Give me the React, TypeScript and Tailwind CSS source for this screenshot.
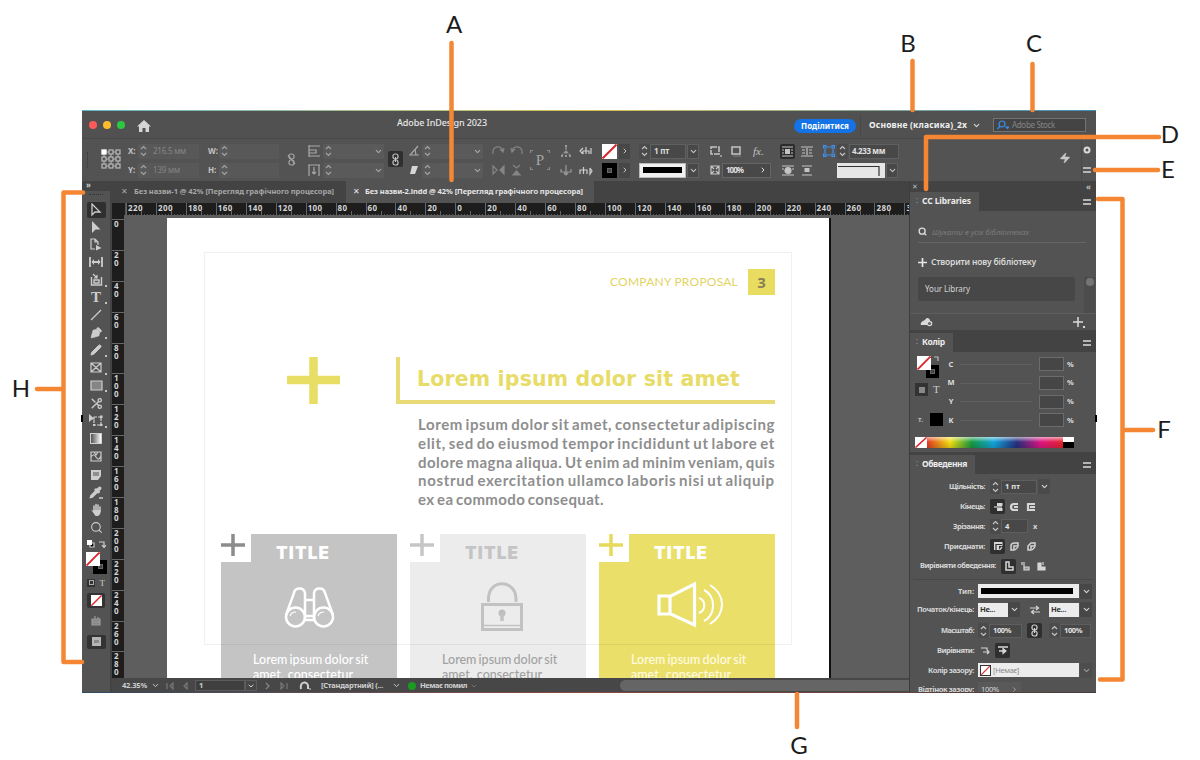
/**
 * Annotated InDesign workspace overview
 * The application window with lettered callouts (A-H) around it
 */

import React, { useLayoutEffect, useRef } from 'react';
import { ChevronDown, ChevronRight, Pencil, PenTool, Pipette, Scissors, Search, Zap } from 'lucide-react';

interface FitProps {
  w: number;
  className?: string;
  children: string;
}

/**
 * Single line of text, tracked so that it fills the given width
 */
const Fit: React.FC<FitProps> = ({ w, className = '', children }) => {
  const ref = useRef<HTMLSpanElement>(null);

  useLayoutEffect(() => {
    const el = ref.current;
    if (!el) return;
    const fit = () => {
      el.style.letterSpacing = '0px';
      const natural = el.getBoundingClientRect().width;
      el.style.letterSpacing = `${(w - natural) / children.length}px`;
    };
    fit();
    document.fonts?.ready.then(fit);
  }, [w, children]);

  return (
    <span ref={ref} className={`inline-block shrink-0 whitespace-pre ${className}`}>
      {children}
    </span>
  );
};

interface IcoProps {
  w?: number;
  h?: number;
  className?: string;
  children: React.ReactNode;
}

const Ico: React.FC<IcoProps> = ({ w = 14, h = 14, className = '', children }) => (
  <svg
    width={w}
    height={h}
    viewBox={`0 0 ${w} ${h}`}
    fill="none"
    stroke="currentColor"
    strokeWidth={1.2}
    className={`shrink-0 ${className}`}
  >
    {children}
  </svg>
);

const Chain: React.FC<{ broken?: boolean; className?: string }> = ({ broken, className = '' }) => (
  <Ico w={9} h={13} className={className}>
    <rect x="2" y="1" width="5" height="5" rx="2" />
    <rect x="2" y="7" width="5" height="5" rx="2" />
    <path d={broken ? 'M1 2 8 11' : 'M4.500 4V9'} />
  </Ico>
);

const Spinner: React.FC<{ dim?: boolean; className?: string }> = ({ dim = false, className = '' }) => (
  <div
    className={`flex h-[15px] w-[11px] shrink-0 items-center justify-center rounded-[2px] ${
      dim ? 'bg-[#5a5a5a] text-[#a3a3a3]' : 'bg-[#4b4b4b] text-[#c4c4c4]'
    } ${className}`}
  >
    <Ico w={7} h={12}>
      <path d="M1 4 3.5 1.5 6 4M1 8 3.5 10.5 6 8" />
    </Ico>
  </div>
);

const Chev: React.FC<{ className?: string }> = ({ className = '' }) => (
  <div className={`flex h-[15px] w-[12px] shrink-0 items-center justify-center ${className}`}>
    <ChevronDown size={9} strokeWidth={3} />
  </div>
);

const NoneSwatch: React.FC<{ className?: string }> = ({ className = '' }) => (
  <svg viewBox="0 0 15 15" preserveAspectRatio="none" className={`shrink-0 bg-white ${className}`}>
    <path d="M0.5 14.5 14.5 0.5" stroke="#d9262c" strokeWidth="2" />
  </svg>
);

const BlackSwatch: React.FC<{ className?: string }> = ({ className = '' }) => (
  <div className={`flex shrink-0 items-center justify-center bg-black ${className}`}>
    <div className="size-[5px] border border-[#666] bg-[#444]" />
  </div>
);

const Menu: React.FC<{ className?: string }> = ({ className = '' }) => (
  <div className={`flex h-[6px] w-[8px] shrink-0 flex-col justify-between ${className}`}>
    <div className="h-[2px] bg-[#b5b5b5]" />
    <div className="h-[2px] bg-[#b5b5b5]" />
  </div>
);

const TitleBar: React.FC = () => (
  <div className="flex h-[27px] items-center bg-[#515151]">
    <div className="ml-[7px] size-[8px] rounded-full bg-[#fb5b57]" />
    <div className="ml-[6px] size-[8px] rounded-full bg-[#fdbc2e]" />
    <div className="ml-[6px] size-[8px] rounded-full bg-[#2bc840]" />
    <Ico w={14} h={12} className="ml-[12px] mt-[2px] text-[#d6d6d6]">
      <path d="M7 0 0 6.5H2V12H5.5V8H8.500V12H12V6.500H14Z" fill="currentColor" stroke="none" />
    </Ico>
    <div className="ml-[246px] mt-[-3px] w-[90px] text-[9px] font-medium text-[#e8e8e8]">
      <Fit w={90}>Adobe InDesign 2023</Fit>
    </div>
    <div className="ml-[307px] mt-[2px] flex h-[14px] w-[62px] items-center justify-center rounded-full bg-[#1473e6] text-[8px] font-bold text-white">
      <Fit w={48}>Поділитися</Fit>
    </div>
    <div className="ml-[4px] h-[20px] w-px bg-[#484848]" />
    <div className="ml-[8px] mt-[2px] w-[98px] text-[8.500px] font-bold text-[#f0f0f0]">
      <Fit w={98}>Основне (класика)_2x</Fit>
    </div>
    <ChevronDown size={9} strokeWidth={3} className="ml-[5px] mt-[2px] text-[#d6d6d6]" />
    <div className="ml-[12px] flex h-[14px] w-[93px] items-center border border-[#737373] bg-[#444] pl-[3px]">
      <Ico w={12} h={10} className="text-[#378ef0]">
        <circle cx="5" cy="4" r="3" />
        <path d="M3 6 0.500 9M9 7H12L10.500 8.500Z" />
      </Ico>
      <Fit w={43} className="ml-[3px] text-[8px] text-[#858585]">Adobe Stock</Fit>
    </div>
  </div>
);

/** Two stacked rows of the control panel */
const Pair: React.FC<{ className?: string; children: React.ReactNode }> = ({ className = '', children }) => (
  <div className={`flex shrink-0 flex-col gap-[3px] ${className}`}>{children}</div>
);

const Row: React.FC<{ className?: string; children?: React.ReactNode }> = ({ className = '', children }) => (
  <div className={`flex h-[16px] items-center ${className}`}>{children}</div>
);

const ControlBar: React.FC = () => (
  <div className="flex h-[43px] items-start overflow-hidden border-t border-[#484848] bg-[#535353] pt-[4px] text-[8px] font-bold text-[#c4c4c4]">
    <div className="ml-[5px] mt-[9px] h-[16px] w-0 border-l border-dotted border-[#3a3a3a]" />
    <Ico w={20} h={20} className="ml-[13px] mt-[6px] text-[#b9b9b9]">
      <path d="M3 3H17V17H3ZM10 3V17M3 10H17" strokeWidth="1" />
      {[3, 10, 17].map((y) =>
        [3, 10, 17].map((x) => <rect key={`${x}-${y}`} x={x - 2} y={y - 2} width="4" height="4" fill="#535353" />)
      )}
      <rect x="0.500" y="0.500" width="5" height="5" fill="#fff" stroke="none" />
    </Ico>
    <Pair className="ml-[7px] w-[71px]">
      <Row>
        <span className="w-[10px]">X:</span>
        <Spinner dim />
        <div className="flex h-[15px] w-[50px] items-center bg-[#585858] pl-[4px] font-normal text-[#858585]"><Fit w={33}>216.5 мм</Fit></div>
      </Row>
      <Row>
        <span className="w-[10px]">Y:</span>
        <Spinner dim />
        <div className="flex h-[15px] w-[50px] items-center bg-[#585858] pl-[4px] font-normal text-[#858585]"><Fit w={27}>139 мм</Fit></div>
      </Row>
    </Pair>
    <Pair className="ml-[9px] w-[71px]">
      {['W:', 'H:'].map((l) => (
        <Row key={l}>
          <span className="w-[11px]">{l}</span>
          <Spinner dim />
          <div className="h-[15px] w-[49px] bg-[#585858]" />
        </Row>
      ))}
    </Pair>
    <Chain broken className="ml-[8px] mr-[2px] mt-[10px] text-[#a5a5a5]" />
    <Pair className="ml-[10px] w-[76px] text-[#a9a9a9]">
      <Row>
        <Ico w={12} h={12}><path d="M1 0V12M1 1H12M1 5H8V8H1M1 11H12" /></Ico>
        <Spinner dim className="ml-[3px]" />
        <div className="h-[15px] w-[38px] bg-[#5a5a5a]" />
        <Chev className="bg-[#5a5a5a]" />
      </Row>
      <Row>
        <Ico w={12} h={12}><path d="M0 1H12M1 1V12M11 1V12M6 3V10M4 8 6 10 8 8" /></Ico>
        <Spinner dim className="ml-[3px]" />
        <div className="h-[15px] w-[38px] bg-[#5a5a5a]" />
        <Chev className="bg-[#5a5a5a]" />
      </Row>
    </Pair>
    <div className="ml-[4px] mt-[8px] flex h-[16px] w-[15px] shrink-0 items-center justify-center rounded-[2px] bg-[#2f2f2f]">
      <Chain />
    </div>
    <Pair className="ml-[6px] w-[76px] text-[#a9a9a9]">
      <Row>
        <Ico w={10} h={12}><path d="M9 1 1 10H10M6 4 7 10" /></Ico>
        <Spinner dim className="ml-[3px]" />
        <div className="h-[15px] w-[38px] bg-[#5a5a5a]" />
        <Chev className="bg-[#5a5a5a]" />
      </Row>
      <Row>
        <Ico w={10} h={12}><path d="M3 2H9L6 10H1Z" fill="#d6d6d6" stroke="none" /></Ico>
        <Spinner dim className="ml-[3px]" />
        <div className="h-[15px] w-[38px] bg-[#5a5a5a]" />
        <Chev className="bg-[#5a5a5a]" />
      </Row>
    </Pair>
    <Pair className="ml-[7px] w-[32px] text-[#858585]">
      <Row className="gap-[5px]">
        <Ico w={13} h={12}><path d="M1 9C0 0 10 0 11 6M8 4 11 7 12 3" /></Ico>
        <Ico w={13} h={12}><path d="M12 9C13 0 3 0 2 6M5 4 2 7 1 3" /></Ico>
      </Row>
      <Row className="gap-[5px]">
        <Ico w={13} h={12}><path d="M1 2 5 6 1 10Z" /><path d="M12 2 8 6 12 10Z" fill="currentColor" /></Ico>
        <Ico w={13} h={12}><path d="M3 1 6.500 4 10 1" /><path d="M3 11 6.500 7 10 11Z" fill="currentColor" /></Ico>
      </Row>
    </Pair>
    <div className="relative ml-[6px] mt-[7px] flex size-[20px] shrink-0 items-center justify-center font-['Liberation_Serif'] text-[15px] font-normal leading-none text-[#a5a5a5]">
      <Ico w={20} h={20} className="absolute left-0 top-0 text-[#8a8a8a]"><path d="M0.500 3V0.500H3M17 0.500H19.500V3M19.500 17V19.500H17M3 19.500H0.500V17" /></Ico>
      P
    </div>
    <Pair className="ml-[10px] w-[34px] text-[#9a9a9a]">
      <Row className="gap-[7px]">
        <Ico w={12} h={12}><path d="M6 2V10M6 6 2 10M6 6 10 10" strokeDasharray="3 1" /><path d="M5 0H7V2H5ZM1 10H3V12H1ZM5 10H7V12H5ZM9 10H11V12H9Z" fill="currentColor" stroke="none" /></Ico>
        <Ico w={14} h={12} className="text-[#cfcfcf]"><path d="M4 3 1 6 4 9M4 9V6H7V9M7 2V6M10 9V6H7M12 3V9" /></Ico>
      </Row>
      <Row className="gap-[7px]">
        <Ico w={12} h={12}><path d="M6 1V11M1 5V8H11V5M4 9 6 11 8 9" /></Ico>
        <Ico w={14} h={12} className="text-[#cfcfcf]"><path d="M1 10V6H8V10M4.500 6V3M4.500 6V10M11 4 13 7 11 10V4" /></Ico>
      </Row>
    </Pair>
    <Pair className="ml-[8px] w-[30px]">
      <Row>
        <NoneSwatch className="h-[15px] w-[15px]" />
        <div className="ml-[2px] flex h-[15px] w-[11px] items-center justify-center bg-[#474747]"><ChevronRight size={8} strokeWidth={3} /></div>
      </Row>
      <Row>
        <BlackSwatch className="h-[15px] w-[15px]" />
        <div className="ml-[2px] flex h-[15px] w-[11px] items-center justify-center bg-[#474747]"><ChevronRight size={8} strokeWidth={3} /></div>
      </Row>
    </Pair>
    <Pair className="ml-[7px] w-[61px]">
      <Row>
        <Spinner />
        <div className="flex h-[15px] w-[36px] items-center border border-[#606060] bg-[#484848] pl-[3px] text-[#dedede]"><Fit w={15}>1 пт</Fit></div>
        <Chev className="ml-px border border-[#606060] bg-[#484848]" />
      </Row>
      <Row>
        <div className="flex h-[15px] w-[47px] shrink-0 items-center border border-[#bbb] bg-[#f0f0f0] px-[3px]"><div className="h-[6px] w-full bg-black" /></div>
        <Chev className="ml-px border border-[#606060] bg-[#484848]" />
      </Row>
    </Pair>
    <Pair className="ml-[10px] w-[62px]">
      <Row className="gap-[9px]">
        <Ico w={12} h={12}><path d="M1 2H9V9H1Z" strokeWidth="1.500" strokeDasharray="6 1" /><path d="M11 10V12" /></Ico>
        <Ico w={10} h={12}><path d="M1 2H9V9H1Z" strokeWidth="1.500" /><path d="M2 11H10" stroke="#777" /></Ico>
        <span className="ml-[3px] font-['Liberation_Serif'] text-[11px] font-normal italic leading-none">fx.</span>
      </Row>
      <Row>
        <Ico w={10} h={11}><path d="M1 1H9V9H1ZM1 1 4 4M9 1 6 4M1 9 4 6M9 9 6 6" /></Ico>
        <div className="ml-[2px] flex h-[15px] w-[49px] shrink-0 items-center justify-between border border-[#656565] bg-[#484848] px-[3px] text-[#e0e0e0]">
          <Fit w={17}>100%</Fit>
          <ChevronRight size={8} strokeWidth={3} />
        </div>
      </Row>
    </Pair>
    <Pair className="ml-[8px] w-[34px]">
      <Row className="gap-[6px]">
        <div className="flex size-[15px] shrink-0 items-center justify-center rounded-[2px] bg-[#2c2c2c]">
          <Ico w={11} h={11}><path d="M0 1H11M0 10H11M0 4H2M9 4H11M0 7H2M9 7H11" /><rect x="3" y="3" width="5" height="5" fill="currentColor" stroke="none" /></Ico>
        </div>
        <Ico w={12} h={11}><path d="M0 1H12M0 10H12M1 4H4M8 4H11M1 7H4M8 7H11M6 2V9" /></Ico>
      </Row>
      <Row className="gap-[6px] pl-[2px]">
        <Ico w={12} h={11}><path d="M0 1H12M0 10H12M0 4H2M10 4H12" /><circle cx="6" cy="5.500" r="3" fill="currentColor" /></Ico>
        <Ico w={12} h={11} className="ml-[1px]"><path d="M1 1H11M1 10H11" /><rect x="3.500" y="3" width="5" height="4" fill="currentColor" stroke="none" /></Ico>
      </Row>
    </Pair>
    <Pair className="ml-[9px] w-[77px]">
      <Row>
        <Ico w={12} h={12} className="text-[#3f92ea]"><path d="M2 4V8M4 2H8M10 4V8M4 10H8" /><path d="M0.600 0.600H3V3H0.600ZM9 0.600H11.400V3H9ZM0.600 9H3V11.400H0.600ZM9 9H11.400V11.400H9Z" /></Ico>
        <Spinner className="ml-[2px]" />
        <div className="ml-px flex h-[15px] w-[50px] items-center border border-[#606060] bg-[#484848] pl-[2px] text-[#e0e0e0]"><Fit w={33}>4.233 мм</Fit></div>
      </Row>
      <Row className="pl-[14px]">
        <div className="flex h-[15px] w-[48px] shrink-0 items-center bg-[#e6e6e6]"><Ico w={46} h={13} className="text-[#333]"><path d="M1 2.500H42V12" /></Ico></div>
        <Chev className="ml-px border border-[#606060] bg-[#484848]" />
      </Row>
    </Pair>
    <Zap size={12} className="ml-[159px] mt-[9px] shrink-0 text-[#c8c8c8]" fill="#c8c8c8" strokeWidth={1} />
    <div className="ml-[10px] mt-[-4px] h-[43px] w-px bg-[#494949]" />
    <div className="flex w-[9px] shrink-0 flex-col items-center">
      <Ico w={8} h={8} className="mt-[3px] text-[#dadada]"><circle cx="4" cy="4" r="2.500" strokeWidth="2" /></Ico>
      <Menu className="mt-[13px]" />
    </div>
  </div>
);

const TOOLS: React.ReactNode[] = [
  <Ico w={12} h={14}><path d="M2 1V12L5 9H10Z" strokeWidth="1.300" /></Ico>,
  <Ico w={12} h={14}><path d="M2 1V13L5.500 9.500H10.500Z" fill="currentColor" stroke="none" /></Ico>,
  <Ico w={12} h={13}><path d="M5 11H1V1H5L8 4V7M5 1V4H8" /><path d="M6 7V12.500L11.500 10Z" fill="currentColor" stroke="none" /></Ico>,
  <Ico w={14} h={12}><path d="M1 1V11M13 1V11M3 6H11" strokeWidth="1.800" /><path d="M5 3 2.500 6 5 9ZM9 3 11.500 6 9 9Z" fill="currentColor" stroke="none" /></Ico>,
  <Ico w={13} h={13}><path d="M1.500 4V12H11.500V4M4 7V10H9V7Z" strokeWidth="1.400" /><path d="M3 1 7 5M7 2V5H4" /></Ico>,
  <span className="font-['Liberation_Serif'] text-[15px] font-bold leading-none">T</span>,
  <Ico w={12} h={12}><path d="M1 11 11 1" /></Ico>,
  <PenTool size={13} fill="currentColor" strokeWidth={1} className="-rotate-90" />,
  <Pencil size={12} fill="currentColor" />,
  <Ico w={13} h={12}><path d="M1 1H11V10H1ZM1 1 11 10M11 1 1 10" /></Ico>,
  <Ico w={13} h={12}><path d="M1 1H12V10H1Z" fill="#858585" /></Ico>,
  <Scissors size={13} strokeWidth={2.5} className="rotate-180" />,
  <Ico w={14} h={13}><path d="M5 3H12V11H5Z" strokeDasharray="3 1" /><path d="M0 0V8L3 5.500H6Z" fill="currentColor" stroke="none" /><path d="M11 1.500H13.500V4H11ZM11 10H13.500V12H11ZM4 10H6V12H4Z" fill="currentColor" stroke="none" /></Ico>,
];

const ToolBar: React.FC = () => (
  <div className="flex w-[28px] shrink-0 flex-col items-center bg-[#535353] text-[#cdcdcd]">
    <div className="h-[10px] w-full bg-[#434343] pl-[4px] text-[8px] font-bold leading-[8px]">»</div>
    <div className="mt-[3px] h-[1px] w-[14px] border-t border-dotted border-[#333]" />
    <div className="mt-[7px] flex flex-col items-center">
      {TOOLS.map((tool, i) => (
        <div
          key={i}
          className={
            i === 0
              ? 'flex h-[16px] w-[19px] items-center justify-center rounded-[2px] bg-[#2f2f2f]'
              : 'relative flex h-[17.650px] w-[19px] items-center justify-center'
          }
        >
          {tool}
          {[4, 5, 7, 8, 9, 10, 12].includes(i) && <i className="absolute bottom-[2px] right-[-1px] size-[2px] bg-[#c4c4c4]" />}
        </div>
      ))}
    </div>
    <div className="mt-[3px] h-[11px] w-[12px] border border-[#d0d0d0] bg-linear-to-r from-[#555] to-white" />
    <Ico w={12} h={11} className="mt-[7px]"><path d="M1 1H11V10H1ZM1 6C3 3 4 3 6 6S9 9 11 5M4 1 6 4 8 1" /></Ico>
    <Ico w={11} h={12} className="mt-[7px]"><path d="M0 1H10V7L7 11H0Z" fill="currentColor" stroke="none" /><path d="M2 4H8M2 6H8" stroke="#535353" /></Ico>
    <div className="mt-[5px] flex items-end">
      <Pipette size={13} fill="currentColor" strokeWidth={2} />
      <div className="ml-[-3px] h-[2px] w-[4px] bg-[#aaa]" />
    </div>
    <Ico w={13} h={13} className="mt-[4px]">
      <path d="M4 8V3M6 7V1.500M8 7V2M10 8V4" strokeWidth="1.500" strokeLinecap="round" />
      <path d="M1 6.500 3.500 8V7H10.700V9C10 12 9 12.500 8 13H5.500Z" fill="currentColor" stroke="none" />
    </Ico>
    <Search size={13} className="mt-[5px]" />
    <div className="mt-[6px] flex w-[19px] items-center justify-between">
      <Ico w={8} h={8}><path d="M3 3H7V7H3Z" fill="#000" /><path d="M0 0H5V5H0Z" fill="#fff" stroke="none" /></Ico>
      <Ico w={8} h={8}><path d="M1 2H6V7M4 5 6 7.500 8 5" /></Ico>
    </div>
    <div className="relative mt-[4px] h-[22px] w-[20px]">
      <BlackSwatch className="absolute right-[-1px] bottom-[0px] size-[14px]" />
      <NoneSwatch className="absolute left-0 top-0 size-[14px]" />
    </div>
    <div className="mt-[5px] flex w-[18px] items-center justify-between">
      <div className="flex size-[8px] items-center justify-center bg-[#333]"><div className="size-[5px] border border-[#aaa]" /></div>
      <span className="font-['Liberation_Serif'] text-[9px] leading-[8px]">T</span>
    </div>
    <div className="mt-[6px] flex h-[15px] w-[18px] items-center justify-center rounded-[2px] bg-[#333]"><NoneSwatch className="size-[11px]" /></div>
    <Ico w={12} h={10} className="mt-[8px] text-[#999]"><path d="M2 3H10V9H2ZM5 0V3M8 1V3M2 6H10" fill="#888" /></Ico>
    <div className="mt-[9px] flex h-[14px] w-[19px] items-center justify-center rounded-[2px] bg-[#333]"><div className="flex h-[9px] w-[9px] items-center justify-center bg-[#b5b5b5]"><div className="h-[3px] w-[5px] bg-[#8a8a8a]" /></div></div>
  </div>
);

const H_RULER = [220, 200, 180, 160, 140, 120, 100, 80, 60, 40, 20, 0, 20, 40, 60, 80, 100, 120, 140, 160, 180, 200, 220, 240, 260, 280, 300];
const V_RULER = [0, 20, 40, 60, 80, 100, 120, 140, 160, 180, 200, 220, 240, 260, 280];

const Ticks: React.FC = () => (
  <svg width="30" height="12" className="absolute left-0 top-0">
    <path d="M0.500 0V12M15.500 8V12" stroke="#666" />
    <path d="M3.500 11V12M6.500 11V12M9.500 11V12M12.500 11V12M18.500 11V12M21.500 11V12M24.500 11V12M27.500 11V12" stroke="#555" />
  </svg>
);

interface CardProps {
  bg: string;
  plus: string;
  title: string;
  text: string;
  icon: React.ReactNode;
}

const Card: React.FC<CardProps> = ({ bg, plus, title, text, icon }) => (
  <div className={`flex h-[144px] w-[176px] shrink-0 flex-col overflow-hidden ${bg}`}>
    <div className="flex h-[38px] shrink-0 items-start">
      <div className="h-[28px] w-[30px] bg-white">
        <svg width="24" height="23" className={plus}>
          <path d="M0 11H24M12 0V22" stroke="currentColor" strokeWidth="3.500" />
        </svg>
      </div>
      <div className={`ml-[25px] mt-[8px] font-[Inter] text-[17px] font-black leading-[22px] ${title}`}>
        <Fit w={54}>TITLE</Fit>
      </div>
    </div>
    <div className="h-[76px] shrink-0 pt-[5px]">{icon}</div>
    <div className={`ml-[32px] flex w-[118px] shrink-0 flex-col font-[Lato] text-[12.500px] font-medium leading-[15px] [word-spacing:-1px] ${text}`}>
      <Fit w={118} className="mt-[4px]">Lorem ipsum dolor sit</Fit>
      <Fit w={118}>amet,  consectetur</Fit>
    </div>
  </div>
);

const BODY_LINES = [
  'Lorem ipsum dolor sit amet, consectetur adipiscing',
  'elit, sed do eiusmod tempor incididunt ut labore et',
  'dolore magna aliqua. Ut enim ad minim veniam, quis',
  'nostrud exercitation ullamco laboris nisi ut aliquip',
];

const Page: React.FC = () => (
  <div className="relative ml-[43px] mt-[3px] flex h-[460px] w-[664px] shrink-0 flex-col border-r-2 border-[#111] bg-white">
    {/* margin guides */}
    <div className="pointer-events-none absolute left-[37px] top-[34px] z-10 h-[393px] w-[588px] border border-[#0000000e]" />
    <div className="ml-[443px] mt-[51px] flex h-[26px] items-center">
      <div className="w-[128px] font-[Lato] text-[12px] text-[#e3d363]"><Fit w={128}>COMPANY PROPOSAL</Fit></div>
      <div className="ml-[10px] flex h-[26px] w-[27px] items-center justify-center bg-[#e8dd60] font-['Open_Sans'] text-[15px] font-bold text-[#8a7f55]">3</div>
    </div>
    <div className="mt-[62px] flex h-[48px]">
      <svg width="53" height="48" className="ml-[120px]">
        <path d="M0 23H53M26.500 0V47" stroke="#e8dd65" strokeWidth="8.500" />
      </svg>
      <div className="ml-[56px] h-[46.500px] w-[379px] border-b-[4.500px] border-l-[4.500px] border-[#e8db76] pl-[17px] pt-[7px] font-['DejaVu_Sans'] text-[20.500px] font-bold leading-[30px] text-[#e8dc68]">
        <Fit w={323}>Lorem ipsum dolor sit amet</Fit>
      </div>
    </div>
    <div className="ml-[251px] mt-[10px] flex flex-col font-[Lato] text-[15px] font-bold leading-[19.800px] text-[#8e8e8e] [word-spacing:-1.500px]">
      {BODY_LINES.map((line) => (
        <div key={line} className="h-[18.800px]"><Fit w={357}>{line}</Fit></div>
      ))}
      <div className="h-[18.800px]"><Fit w={186}>ex ea commodo consequat.</Fit></div>
    </div>
    <div className="mt-auto flex gap-[13px] pl-[54px]">
      <Card
        bg="bg-[#c4c4c4]"
        plus="text-[#8c8c8c]"
        title="text-white"
        text="text-white"
        icon={
          <svg width="176" height="71" fill="none" stroke="#fff" strokeWidth="2.500">
            <path d="M65 38 73 16C74 10 83 10 84 16V42M112 38 104 16C103 10 94 10 93 16V42M84 23H93M84 39H93M84 43H93" />
            <circle cx="74.500" cy="40" r="9.500" />
            <circle cx="102.500" cy="40" r="9.500" />
            <path d="M69 39C70 36 72 35 75 35M97 39C98 36 100 35 103 35" strokeWidth="1.200" />
          </svg>
        }
      />
      <Card
        bg="bg-[#ececec]"
        plus="text-[#c6c6c6]"
        title="text-[#c4c4c4]"
        text="text-[#a2a2a2]"
        icon={
          <svg width="176" height="71" fill="none" stroke="#c2c2c2" strokeWidth="3">
            <path d="M72.500 27.500H111.500V52.500H72.500Z" />
            <path d="M72 48.500H112" strokeWidth="1.500" />
            <path d="M78.500 25V21C79 2 105 2 106 21V25" />
            <circle cx="92" cy="36" r="3.500" fill="#bdbdbd" stroke="none" />
            <path d="M92 36V44" strokeWidth="3.500" />
          </svg>
        }
      />
      <Card
        bg="bg-[#eadf69]"
        plus="text-[#e6da5c]"
        title="text-white"
        text="text-[#fffbe0]"
        icon={
          <svg width="176" height="71" fill="none" stroke="#fff" strokeWidth="3.200">
            <path d="M60 19H72L95.500 7V48L72 37H60ZM71 19V37" />
            <path d="M100 21C107 23 107 33 100 36" strokeWidth="2" />
            <path d="M105 13C117 19 117 38 105 44" strokeWidth="2" />
            <path d="M111 8C127 18 127 37 111 47" strokeWidth="2" />
          </svg>
        }
      />
    </div>
  </div>
);

const StatusBar: React.FC = () => (
  <div className="flex h-[14px] items-center bg-[#474747] pt-px text-[7.500px] font-bold text-[#cfcfcf]">
    <div className="ml-[10px] w-[25px]"><Fit w={25}>42.35%</Fit></div>
    <ChevronDown size={9} strokeWidth={2.500} className="ml-[4px] shrink-0" />
    <Ico w={8} h={8} className="ml-[6px] text-[#777]"><path d="M1 1V7M7 1 4 4 7 7Z" /></Ico>
    <Ico w={5} h={8} className="ml-[9px] text-[#777]"><path d="M4 1 1 4 4 7Z" /></Ico>
    <div className="ml-[7px] flex h-[11px] w-[50px] shrink-0 items-center border border-[#5c5c5c] bg-[#3f3f3f] pl-[3px]">1</div>
    <div className="flex h-[11px] w-[12px] shrink-0 items-center justify-center border border-[#5c5c5c]"><ChevronDown size={8} strokeWidth={3} /></div>
    <Ico w={5} h={8} className="ml-[8px] text-[#888]"><path d="M1 1 4 4 1 7" /></Ico>
    <Ico w={8} h={8} className="ml-[10px] text-[#777]"><path d="M7 1V7M1 1 4 4 1 7Z" /></Ico>
    <Ico w={12} h={10} className="ml-[11px]"><path d="M2 8C0 0 9 0 9 5M9 5V8" strokeWidth="2" /><path d="M10 8H12" /></Ico>
    <div className="ml-[10px] w-[62px]"><Fit w={62}>[Стандартний] (...</Fit></div>
    <ChevronDown size={9} strokeWidth={2.500} className="ml-[9px] shrink-0" />
    <div className="ml-[7px] size-[8px] shrink-0 rounded-full bg-[#1d9a22]" />
    <div className="ml-[4px] w-[47px]"><Fit w={47}>Немає помил</Fit></div>
    <ChevronDown size={8} className="ml-[3px] shrink-0 text-[#888]" />
    <div className="ml-auto h-[11px] w-[289px] shrink-0 rounded-l-full bg-[#656565]" />
  </div>
);

const DocumentArea: React.FC = () => (
  <div className="flex w-[797px] shrink-0 flex-col overflow-hidden bg-[#5e5e5e]">
    <div className="flex h-[22px] shrink-0 bg-[#434343] text-[7.500px] font-bold text-[#a6a6a6]">
      <div className="flex w-[234px] items-center pl-[9px]">
        <span className="w-[13px] font-normal">✕</span>
        <Fit w={200}>Без назви-1 @ 42% [Перегляд графічного процесора]</Fit>
      </div>
      <div className="flex w-[248px] items-center bg-[#535353] pl-[7px] text-[#e6e6e6]">
        <span className="w-[12px] font-normal">✕</span>
        <Fit w={218}>Без назви-2.indd @ 42% [Перегляд графічного процесора]</Fit>
      </div>
    </div>
    <div className="flex h-[12px] shrink-0 overflow-hidden bg-[#1d1d1d]">
      <div className="w-[14px] shrink-0 border-r border-[#555]" />
      {H_RULER.map((n, i) => (
        <div key={i} className="relative w-[29.950px] shrink-0 pl-[2px] text-[8px] font-bold leading-[10px] text-[#d4d4d4]">
          <Ticks />
          <Fit w={n >= 100 ? 15 : n > 0 ? 10 : 5}>{String(n)}</Fit>
        </div>
      ))}
    </div>
    <div className="flex h-[463px] shrink-0">
      <div className="flex w-[12px] shrink-0 flex-col overflow-hidden bg-[#1d1d1d] pt-[4px]">
        {V_RULER.map((n) => (
          <div key={n} className="flex h-[30.900px] shrink-0 flex-col border-t border-[#666] pl-[2px] text-[8px] font-bold leading-[8px] text-[#d4d4d4]">
            {String(n).split('').map((d, i) => (
              <span key={i}>{d}</span>
            ))}
          </div>
        ))}
      </div>
      <Page />
    </div>
    <StatusBar />
  </div>
);

const PanelTab: React.FC<{ title: string; w: number; className: string }> = ({ title, w, className }) => (
  <div className="flex h-[19px] shrink-0 items-center bg-[#434343]">
    <div className={`flex h-full items-center bg-[#535353] pl-[6px] text-[8.500px] font-bold text-[#ececec] ${className}`}>
      <span className="w-[6px] text-[7px] text-[#999]">⁚</span>
      <Fit w={w}>{title}</Fit>
    </div>
    <Menu className="ml-auto mr-[5px]" />
  </div>
);

const LibrariesPanel: React.FC = () => (
  <div className="flex h-[122px] shrink-0 flex-col">
    <div className="ml-[8px] mt-[10px] flex h-[22px] w-[168px] items-center border-b border-[#666]">
      <Search size={9} strokeWidth={3.500} className="text-[#ddd]" />
      <Fit w={97} className="ml-[5px] text-[8px] italic text-[#7c7c7c]">Шукати в усіх бібліотеках</Fit>
    </div>
    <div className="ml-[8px] mt-[12px] flex h-[14px] items-center text-[8.500px] font-semibold text-[#dadada]">
      <Ico w={9} h={9} className="text-[#e5e5e5]"><path d="M0 4.500H9M4.500 0V9" strokeWidth="1.700" /></Ico>
      <Fit w={105} className="ml-[4px]">Створити нову бібліотеку</Fit>
    </div>
    <div className="mt-[8px] flex h-[36px]">
      <div className="ml-[8px] flex h-[24px] w-[157px] items-center rounded-[2px] bg-[#474747] pl-[7px] text-[8px] text-[#d5d5d5]">
        <Fit w={45}>Your Library</Fit>
      </div>
      <div className="ml-[9px] flex w-[11px] justify-center bg-[#4c4c4c] pt-[1px]"><div className="size-[8px] rounded-full bg-[#757575]" /></div>
    </div>
    <div className="flex flex-1 items-center border-t border-[#5e5e5e] bg-[#505050] pl-[10px] pr-[11px] text-[#dadada]">
      <Ico w={13} h={10}><path d="M1 8H8C8 6 10 5 10 6V3C8 0 6 1 5 3 2 4 0 6 1 8Z" fill="currentColor" stroke="none" /><circle cx="9.500" cy="6.500" r="2.200" fill="#666" /></Ico>
      <Ico w={12} h={11} className="ml-auto"><path d="M0 5H10M5 0V10" strokeWidth="1.500" /><path d="M10 10H12" strokeWidth="2" /></Ico>
    </div>
    <div className="h-[3px] bg-[#434343]" />
  </div>
);

const ColorPanel: React.FC = () => (
  <div className="flex h-[103px] shrink-0 flex-col">
    <div className="flex h-[79px] pt-[3px]">
      <div className="ml-[5px] flex w-[32px] shrink-0 flex-col">
        <div className="relative ml-[2px] mt-[1px] h-[22px] w-[22px]">
          <BlackSwatch className="absolute bottom-0 right-0 size-[13px]" />
          <NoneSwatch className="absolute left-0 top-0 size-[14px]" />
          <Ico w={6} h={6} className="absolute right-[-1px] top-0 text-[#bbb]"><path d="M0 1H4V5" /></Ico>
        </div>
        <div className="mt-[5px] flex items-center">
          <div className="flex h-[13px] w-[13px] items-center justify-center bg-[#333]"><div className="size-[6px] bg-[#888]" /></div>
          <span className="ml-[5px] font-['Liberation_Serif'] text-[11px] leading-none text-[#ccc]">T</span>
        </div>
        <div className="mt-[17px] flex items-center">
          <span className="w-[15px] pl-[3px] text-[7px] font-bold leading-none text-[#bbb]">т.</span>
          <div className="h-[13px] w-[13px] bg-black" />
        </div>
      </div>
      <div className="flex flex-col">
        {['C', 'M', 'Y', 'K'].map((c) => (
          <div key={c} className="flex h-[18.700px] items-center text-[7.500px] font-bold text-[#dedede]">
            <span className="w-[8px] text-center">{c}</span>
            <div className="ml-[5px] h-px w-[72px] bg-[#5f5f5f]" />
            <div className="ml-[7px] h-[14px] w-[25px] border border-[#6c6c6c] bg-[#464646]" />
            <span className="ml-[3px]">%</span>
          </div>
        ))}
      </div>
    </div>
    <div className="ml-[5px] mt-[6px] flex h-[11px] w-[159px]">
      <NoneSwatch className="h-[11px] w-[12px]" />
      <div className="flex-1 bg-[linear-gradient(to_bottom,rgba(255,255,255,0.6),transparent_45%,rgba(0,0,0,0.15)),linear-gradient(to_right,#e33a24,#f4e012_17%,#159a41_33%,#12a5dc_49%,#25307f_66%,#e01583_84%,#e5252b)]" />
      <div className="flex w-[11px] flex-col"><div className="h-[5px] bg-white" /><div className="h-[6px] bg-black" /></div>
    </div>
    <div className="mt-auto h-[3px] bg-[#434343]" />
  </div>
);

const StrokeRow: React.FC<{ label: string; w: number; end: string; className?: string; children: React.ReactNode }> = ({
  label,
  w,
  end,
  className = 'h-[19.800px]',
  children,
}) => (
  <div className={`flex shrink-0 items-center text-[7.500px] font-bold text-[#d6d6d6] ${className}`}>
    <div className={`flex shrink-0 justify-end ${end}`}><Fit w={w}>{label}</Fit></div>
    {children}
  </div>
);

const DarkBtn: React.FC<{ className?: string; children: React.ReactNode }> = ({ className = '', children }) => (
  <div className={`flex size-[15px] shrink-0 items-center justify-center rounded-[2px] bg-[#2f2f2f] ${className}`}>{children}</div>
);

const Field: React.FC<{ className?: string; children?: React.ReactNode }> = ({ className = '', children }) => (
  <div className={`flex h-[14px] shrink-0 items-center border border-[#5e5e5e] bg-[#484848] pl-[3px] text-[#e3e3e3] ${className}`}>{children}</div>
);

const StrokePanel: React.FC = () => (
  <div className="flex min-h-0 flex-1 flex-col overflow-hidden pt-[3px]">
    <StrokeRow label="Щільність:" w={36} end="w-[75px]">
      <Spinner className="ml-[5px]" />
      <Field className="w-[36px]"><Fit w={15}>1 пт</Fit></Field>
      <Chev className="ml-px bg-[#4a4a4a]" />
    </StrokeRow>
    <StrokeRow label="Кінець:" w={25} end="w-[75px]">
      <DarkBtn className="ml-[5px]"><Ico w={10} h={10}><path d="M4 1H9.500V4H4ZM4 6H9.500V9H4Z" fill="currentColor" stroke="none" /><path d="M1 5H9" /></Ico></DarkBtn>
      <Ico w={10} h={10} className="ml-[4px]"><path d="M9 2H5C1 2 1 8 5 8H9M5 5H9" strokeWidth="2.200" /></Ico>
      <Ico w={10} h={10} className="ml-[7px]"><path d="M9 2H2V8H9M4 5H9" strokeWidth="2.200" /></Ico>
    </StrokeRow>
    <StrokeRow label="Зрізання:" w={32} end="w-[75px]">
      <Spinner className="ml-[5px]" />
      <Field className="w-[27px]">4</Field>
      <span className="ml-[5px]">x</span>
    </StrokeRow>
    <StrokeRow label="Приєднати:" w={41} end="w-[75px]">
      <DarkBtn className="ml-[5px]"><Ico w={10} h={10}><path d="M1 9V1H9.500V5H6V9Z" fill="currentColor" stroke="none" /><path d="M3 9V3.500H9" stroke="#2f2f2f" /><path d="M6.500 9 9 6" /></Ico></DarkBtn>
      <Ico w={10} h={10} className="ml-[4px]"><path d="M2 9V5C2 3 4 2 6 2H9V5H5V9Z" strokeWidth="1.500" /><path d="M6 9 9 6" /></Ico>
      <Ico w={10} h={10} className="ml-[7px]"><path d="M2 9V5L5 2H9V5H5V9Z" strokeWidth="1.500" /><path d="M6 9 9 6" /></Ico>
    </StrokeRow>
    <StrokeRow label="Вирівняти обведення:" w={76} end="w-[86px]">
      <DarkBtn className="ml-[5px]"><Ico w={10} h={10}><path d="M2 1V9H9V6H5V1Z" strokeWidth="1.500" /></Ico></DarkBtn>
      <Ico w={10} h={10} className="ml-[4px]"><path d="M2 1V4M4 1V6H9V9H4Z" fill="#999" /></Ico>
      <Ico w={10} h={10} className="ml-[6px]"><path d="M2 2V9H9V6H5V2Z" fill="currentColor" /><path d="M7 1V4" /></Ico>
    </StrokeRow>
    <div className="mx-[3px] mt-[3px] h-px shrink-0 bg-[#484848]" />
    <StrokeRow label="Тип:" w={16} end="w-[64px]" className="mt-[2px] h-[19px]">
      <div className="ml-[4px] flex h-[14px] w-[101px] shrink-0 items-center bg-[#ececec] pl-[3px]"><div className="h-[6px] w-[92px] bg-black" /></div>
      <Chev className="ml-px bg-[#474747]" />
    </StrokeRow>
    <StrokeRow label="Початок/кінець:" w={57} end="w-[64px]" className="h-[18px]">
      <div className="ml-[4px] flex h-[14px] w-[30px] shrink-0 items-center bg-[#ececec] pl-[2px] text-[#333]"><Fit w={15}>Не...</Fit></div>
      <Chev className="bg-[#474747]" />
      <Ico w={10} h={10} className="ml-[10px]"><path d="M0 3H8M6 1 8.500 3 6 5M10 7H2M4 5 1.500 7 4 9" /></Ico>
      <div className="ml-[9px] flex h-[14px] w-[30px] shrink-0 items-center bg-[#ececec] pl-[2px] text-[#333]"><Fit w={15}>Не...</Fit></div>
      <Chev className="ml-px bg-[#474747]" />
    </StrokeRow>
    <StrokeRow label="Масштаб:" w={33} end="w-[64px]" className="mt-[2px] h-[20px]">
      <Spinner className="ml-[4px]" />
      <Field className="w-[33px]"><Fit w={18}>100%</Fit></Field>
      <DarkBtn className="ml-[5px]"><Chain /></DarkBtn>
      <Spinner className="ml-[7px]" />
      <Field className="w-[31px]"><Fit w={18}>100%</Fit></Field>
    </StrokeRow>
    <StrokeRow label="Вирівняти:" w={37} end="w-[64px]" className="h-[19px]">
      <Ico w={9} h={10} className="ml-[7px]"><path d="M0 3H6V5M2 7H8M6 5 8 7 6 9" /></Ico>
      <DarkBtn className="ml-[5px]"><Ico w={10} h={10}><path d="M0 2H10M1 6H8" strokeWidth="1.500" /><path d="M5 3.500V8.500L8 6Z" fill="currentColor" /></Ico></DarkBtn>
    </StrokeRow>
    <StrokeRow label="Колір зазору:" w={46} end="w-[64px]" className="h-[21px]">
      <div className="ml-[4px] flex h-[14px] w-[101px] shrink-0 items-center bg-[#ececec] pl-[3px] font-normal text-[#888]">
        <NoneSwatch className="mr-[3px] size-[9px] outline outline-[#333]" />
        <Fit w={26}>[Немає]</Fit>
      </div>
      <Chev className="ml-px bg-[#4d4d4d] text-[#999]" />
    </StrokeRow>
    <StrokeRow label="Відтінок зазору:" w={56} end="w-[64px]" className="h-[17px] text-[#aaa]">
      <div className="ml-[4px] flex h-[14px] w-[43px] items-center justify-between bg-[#595959] px-[3px] font-normal">
        <Fit w={18}>100%</Fit>
        <ChevronRight size={7} />
      </div>
    </StrokeRow>
  </div>
);

const SidePanels: React.FC = () => (
  <div className="flex min-w-0 flex-1 flex-col overflow-hidden border-l border-[#3c3c3c] bg-[#535353]">
    <div className="flex h-[11px] shrink-0 items-center justify-between bg-[#434343] pl-[2px] pr-[5px] text-[7px] leading-none text-[#bbb]">
      <span>✕</span>
      <span className="text-[8px] font-bold">«</span>
    </div>
    <PanelTab title="CC Libraries" w={49} className="w-[69px]" />
    <LibrariesPanel />
    <PanelTab title="Колір" w={23} className="w-[43px]" />
    <ColorPanel />
    <PanelTab title="Обведення" w={45} className="w-[65px]" />
    <StrokePanel />
  </div>
);

const CALLOUTS = [
  { letter: 'A', place: 'left-[434px] top-[9px]' },
  { letter: 'B', place: 'left-[888px] top-[28px]' },
  { letter: 'C', place: 'left-[1014px] top-[28px]' },
  { letter: 'D', place: 'left-[1150px] top-[119px]' },
  { letter: 'E', place: 'left-[1148px] top-[154px]' },
  { letter: 'F', place: 'left-[1144px] top-[414px]' },
  { letter: 'G', place: 'left-[779px] top-[730px]' },
  { letter: 'H', place: 'left-[1px] top-[373px]' },
];

const Callouts: React.FC = () => (
  <>
    <svg width="1200" height="760" className="absolute left-0 top-0" fill="none" stroke="#f58634" strokeWidth="4.500" strokeLinecap="round" strokeLinejoin="round">
      <path d="M451.500 43V180" />
      <path d="M912.500 61V110" />
      <path d="M1032.500 64V110" />
      <path d="M926 189V137H1159" />
      <path d="M1095 170H1158" />
      <path d="M1098 199H1122.500V679.500H1100M1122.500 430H1153" />
      <path d="M797 694V727" />
      <path d="M83 192.500H63.500V662H82M37 389H63.500" />
    </svg>
    {CALLOUTS.map(({ letter, place }) => (
      <div key={letter} className={`absolute w-[40px] text-center font-[Lato] text-[24px] leading-[30px] text-[#1c1c1c] ${place}`}>
        {letter}
      </div>
    ))}
  </>
);

const App: React.FC = () => (
  <div className="relative h-[760px] w-[1200px] overflow-hidden bg-white pl-[82px] pt-[110px] font-['Noto_Sans',sans-serif]">
    <div className="flex h-[583px] w-[1014px] flex-col overflow-hidden bg-[#535353]">
      <div className="h-px shrink-0 bg-linear-to-r from-[#5fb8c8] via-[#d8c04a] to-[#3f8fb8]" />
      <TitleBar />
      <ControlBar />
      <div className="flex h-[511px] shrink-0">
        <ToolBar />
        <div className="w-[2px] shrink-0 bg-[#434343]" />
        <DocumentArea />
        <SidePanels />
      </div>
      <div className="h-px shrink-0 bg-linear-to-r from-[#2f4a63] via-[#8a4a3c] to-[#4a3c3c]" />
    </div>
    <div className="absolute left-[81px] top-[415px] h-[7px] w-[2px] bg-black" />
    <div className="absolute left-[1095px] top-[415px] h-[7px] w-[2px] bg-black" />
    <Callouts />
  </div>
);

export default App;
